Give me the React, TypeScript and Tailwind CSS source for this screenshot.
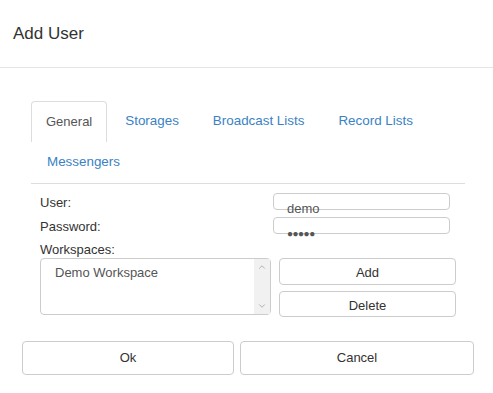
import { ChevronDown, ChevronUp } from "lucide-react";

const tabs = ["General", "Storages", "Broadcast Lists", "Record Lists", "Messengers"];

const FakeInput = ({ children }: { children: React.ReactNode }) => (
  <div className="relative h-[17px] w-[177px] rounded-[4px] border border-[#cccccc] bg-white">
    {/* text sits low and runs over the bottom border, as in the original */}
    <span className="absolute left-[13px] top-[7px] whitespace-nowrap text-[13px] leading-[16px] text-[#555555]">
      {children}
    </span>
  </div>
);

export default function App() {
  return (
    <div
      className="h-[393px] w-[493px] overflow-hidden bg-white text-[#333333]"
      style={{ fontFamily: '"Liberation Sans", Arial, sans-serif' }}
    >
      {/* header */}
      <div className="flex h-[68px] items-center border-b border-[#e5e5e5] px-[13px]">
        <h1 className="text-[17px] leading-[20px]">Add User</h1>
      </div>

      <div className="pt-[33px]">
        {/* tabs */}
        <div className="ml-[31px] flex w-[434px] flex-wrap border-b border-[#dddddd]">
          {tabs.map((t, i) => (
            <div
              key={t}
              className={
                i === 0
                  ? "mr-[2px] flex h-[41px] items-center rounded-t-[4px] border border-b-0 border-[#dddddd] px-[15px] text-[13px] text-[#555555]"
                  : "mr-[2px] flex h-[41px] items-center border border-transparent px-[15px] text-[13.4px] text-[#3a82c4]"
              }
            >
              <span className={i === 0 ? "-mx-[1px]" : ""}>{t}</span>
            </div>
          ))}
        </div>

        {/* form */}
        <div className="ml-[40px] w-[416px] pt-[9px] text-[13px]">
          <div className="flex h-[17px] items-center">
            <span className="w-[233px] pt-[3px]">User:</span>
            <FakeInput>demo</FakeInput>
          </div>
          <div className="mt-[7px] flex h-[17px] items-center">
            <span className="w-[233px] pt-[3px]">Password:</span>
            <FakeInput>
              <span className="text-[10px] tracking-[-0.5px]">●●●●●</span>
            </FakeInput>
          </div>
          <div className="mt-[7px] h-[17px] leading-[17px]">Workspaces:</div>

          <div className="flex gap-[8px]">
            <div className="flex h-[57px] w-[232px] rounded-[4px] border border-[#cccccc]">
              <div className="flex-1 px-[14px] pt-[6px] leading-[16px] text-[#555555]">Demo Workspace</div>
              <div className="flex w-[16px] flex-col items-center justify-between bg-[#f1f1f1] py-[3px] text-[#a3a3a3]">
                <ChevronUp size={10} strokeWidth={2} />
                <ChevronDown size={10} strokeWidth={2} />
              </div>
            </div>
            <div className="flex flex-col gap-[6px]">
              <button className="h-[27px] w-[177px] rounded-[4px] border border-[#cccccc] bg-white pt-[3px] text-[13px] text-[#333333]">
                Add
              </button>
              <button className="h-[26px] w-[177px] rounded-[4px] border border-[#cccccc] bg-white pt-[3px] text-[13px] text-[#333333]">
                Delete
              </button>
            </div>
          </div>
        </div>

        {/* footer */}
        <div className="ml-[22px] mt-[24px] flex gap-[6px]">
          <button className="h-[34px] w-[212px] rounded-[4px] border border-[#cccccc] bg-white text-[13px] text-[#333333]">
            Ok
          </button>
          <button className="h-[34px] w-[234px] rounded-[4px] border border-[#cccccc] bg-white text-[13px] text-[#333333]">
            Cancel
          </button>
        </div>
      </div>
    </div>
  );
}
